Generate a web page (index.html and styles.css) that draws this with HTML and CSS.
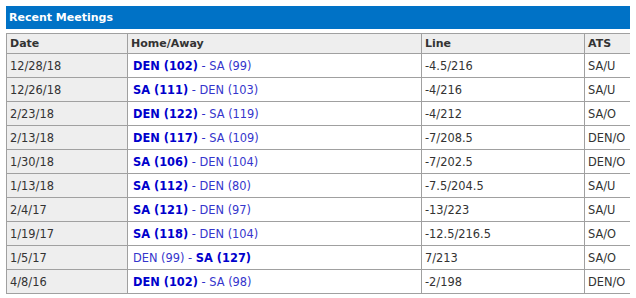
FILE: index.html
```html
<!DOCTYPE html>
<html>
<head>
<meta charset="utf-8">
<link rel="stylesheet" href="styles.css">
</head>
<body>
<div class="panel">
  <div class="panel-title">Recent Meetings</div>
  <table class="meetings">
    <thead>
      <tr><th class="c-date">Date</th><th class="c-team">Home/Away</th><th class="c-line">Line</th><th class="c-ats">ATS</th></tr>
    </thead>
    <tbody>
      <tr><td class="c-date">12/28/18</td><td class="c-team"><b>DEN (102)</b> - <span>SA (99)</span></td><td>-4.5/216</td><td>SA/U</td></tr>
      <tr><td class="c-date">12/26/18</td><td class="c-team"><b>SA (111)</b> - <span>DEN (103)</span></td><td>-4/216</td><td>SA/U</td></tr>
      <tr><td class="c-date">2/23/18</td><td class="c-team"><b>DEN (122)</b> - <span>SA (119)</span></td><td>-4/212</td><td>SA/O</td></tr>
      <tr><td class="c-date">2/13/18</td><td class="c-team"><b>DEN (117)</b> - <span>SA (109)</span></td><td>-7/208.5</td><td>DEN/O</td></tr>
      <tr><td class="c-date">1/30/18</td><td class="c-team"><b>SA (106)</b> - <span>DEN (104)</span></td><td>-7/202.5</td><td>DEN/O</td></tr>
      <tr><td class="c-date">1/13/18</td><td class="c-team"><b>SA (112)</b> - <span>DEN (80)</span></td><td>-7.5/204.5</td><td>SA/U</td></tr>
      <tr><td class="c-date">2/4/17</td><td class="c-team"><b>SA (121)</b> - <span>DEN (97)</span></td><td>-13/223</td><td>SA/U</td></tr>
      <tr><td class="c-date">1/19/17</td><td class="c-team"><b>SA (118)</b> - <span>DEN (104)</span></td><td>-12.5/216.5</td><td>SA/O</td></tr>
      <tr><td class="c-date">1/5/17</td><td class="c-team"><span>DEN (99)</span> - <b>SA (127)</b></td><td>7/213</td><td>SA/O</td></tr>
      <tr><td class="c-date">4/8/16</td><td class="c-team"><b>DEN (102)</b> - <span>SA (98)</span></td><td>-2/198</td><td>DEN/O</td></tr>
    </tbody>
  </table>
</div>
</body>
</html>
```
FILE: styles.css
```css
html, body {
  overflow: hidden;
}
body {
  margin: 6px;
  font-family: "DejaVu Sans", Verdana, sans-serif;
  font-size: 11px;
  color: #333;
  background: #fff;
}
.panel {
  width: 650px;
}
.panel-title {
  background: #0072c6;
  color: #fff;
  font-weight: bold;
  height: 23px;
  line-height: 23px;
  padding-left: 3px;
  margin-bottom: 4px;
}
.meetings {
  width: 100%;
  border-collapse: collapse;
  table-layout: fixed;
}
.meetings th,
.meetings td {
  border: 1px solid #a0a0a0;
  text-align: left;
  padding: 0 3px;
  white-space: nowrap;
}
.meetings th {
  background: #eeeeee;
  font-weight: bold;
  height: 19px;
  color: #333;
}
.meetings td {
  height: 23px;
  font-size: 11.4px;
}
.meetings td.c-date {
  background: #eeeeee;
}
.c-date { width: 114px; }
.c-team { width: 287px; }
.c-line { width: 156px; }
.meetings td.c-team {
  color: #2f2fc8;
  padding-left: 5px;
}
.c-team b {
  color: #0000cc;
}
.c-team span {
  color: #3535cc;
}
```
